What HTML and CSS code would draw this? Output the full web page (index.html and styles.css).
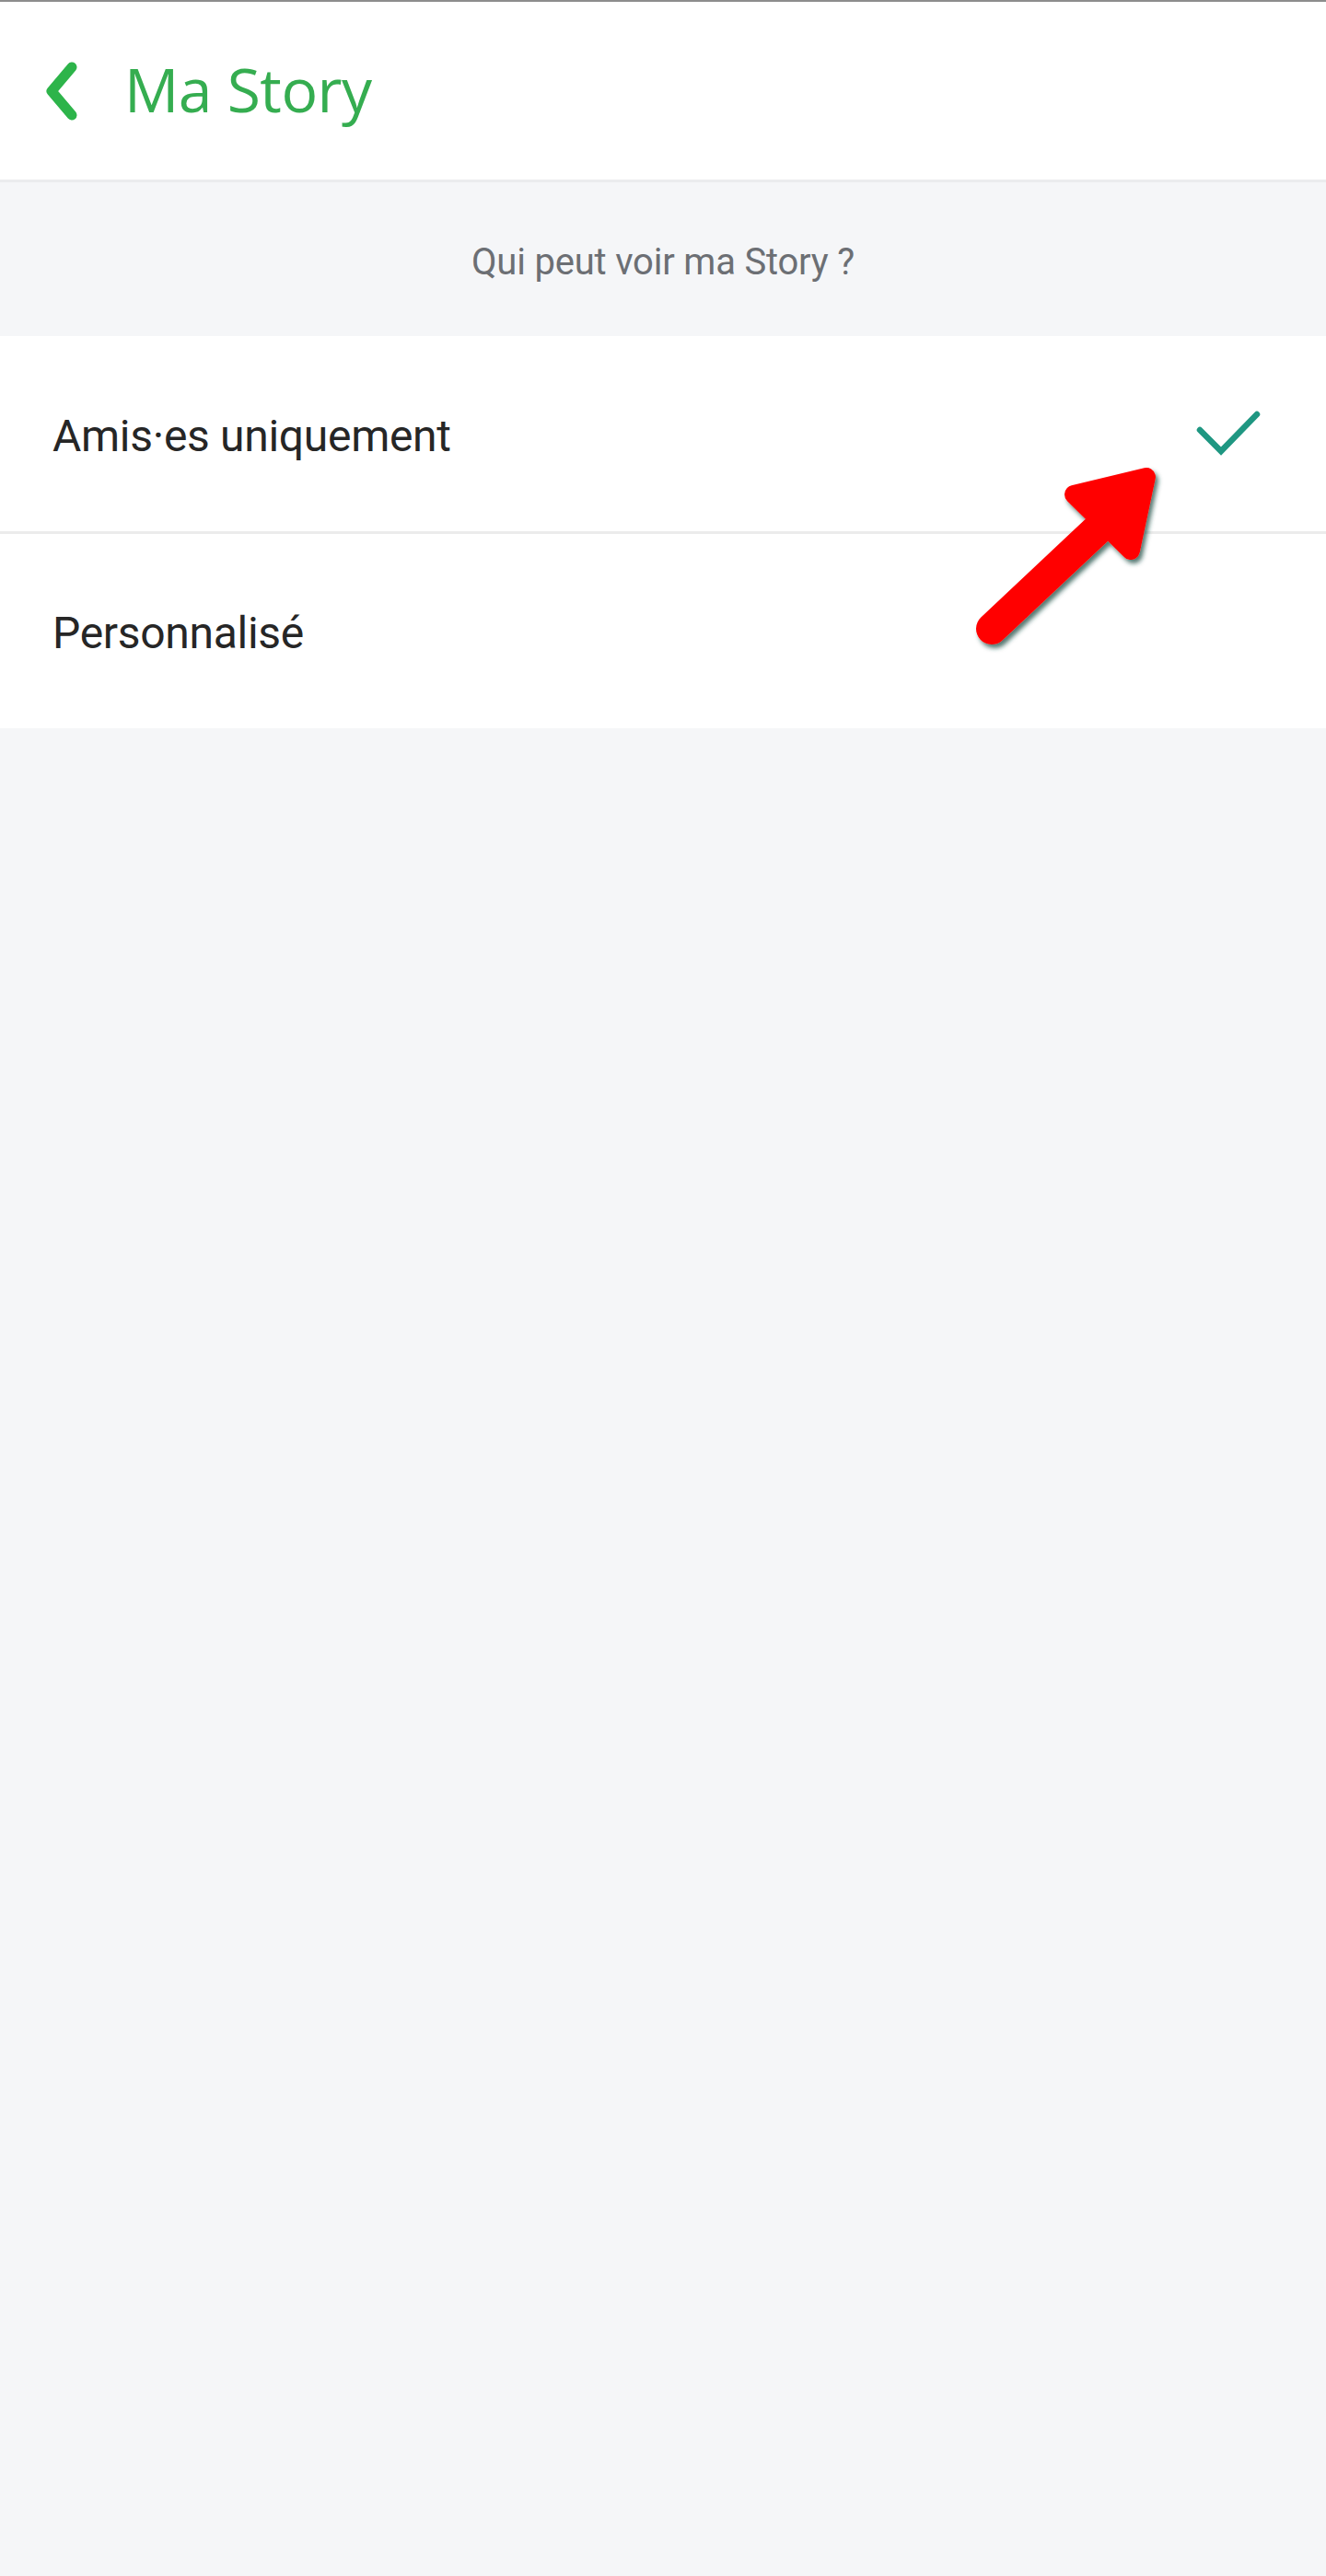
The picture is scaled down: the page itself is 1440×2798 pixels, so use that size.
FILE: index.html
```html
<!DOCTYPE html>
<html lang="fr">
<head>
<meta charset="utf-8">
<title>Ma Story</title>
<link rel="stylesheet" href="styles.css">
</head>
<body>
<div class="page">
  <header class="topbar">
    <svg class="back" width="40" height="64" viewBox="0 0 40 64" aria-hidden="true">
      <polyline points="31,6 9,32 31,58" fill="none" stroke="#2db44a" stroke-width="11" stroke-linecap="round" stroke-linejoin="round"/>
    </svg>
    <h1 class="title">Ma Story</h1>
  </header>
  <div class="section-label">Qui peut voir ma Story ?</div>
  <ul class="options">
    <li class="option">
      <span>Amis·es uniquement</span>
      <svg class="check" width="72" height="54" viewBox="0 0 72 54" aria-hidden="true">
        <polyline points="5,25 28,48 67,8" fill="none" stroke="#1f9782" stroke-width="6.5" stroke-linecap="round" stroke-linejoin="miter"/>
      </svg>
    </li>
    <li class="option">
      <span>Personnalisé</span>
    </li>
  </ul>
  <svg class="annotation" width="240" height="240" viewBox="1040 480 240 240" aria-hidden="true">
    <defs>
      <filter id="shadow" x="-20%" y="-20%" width="140%" height="140%">
        <feDropShadow dx="3" dy="4" stdDeviation="2.5" flood-color="#1f4a40" flood-opacity="0.75"/>
      </filter>
    </defs>
    <g filter="url(#shadow)" fill="#ff0000" stroke="#ff0000">
      <line x1="1077" y1="683" x2="1195" y2="572" stroke-width="34" stroke-linecap="round"/>
      <polygon points="1166,537 1245,518 1228,598" stroke-width="20" stroke-linejoin="round"/>
    </g>
  </svg>
</div>
</body>
</html>
```

FILE: styles.css
```css
* {
  box-sizing: border-box;
}

html, body {
  margin: 0;
  padding: 0;
}

body {
  background: #f5f6f8;
  font-family: Roboto, "Noto Sans", "Liberation Sans", sans-serif;
}

.page {
  position: relative;
  min-height: 2798px;
  background: #f5f6f8;
}

.topbar {
  display: flex;
  align-items: center;
  height: 198px;
  padding-left: 47px;
  background: #ffffff;
  border-top: 2px solid #8d8d8d;
  border-bottom: 3px solid #ebecee;
}

.back {
  display: block;
  flex: none;
}

.title {
  margin: 0 0 0 48px;
  font-family: "Open Sans", "Noto Sans", sans-serif;
  font-weight: 500;
  font-size: 66px;
  line-height: 1;
  color: #35ad50;
  letter-spacing: -0.5px;
  padding-bottom: 6px;
}

.section-label {
  display: flex;
  align-items: center;
  justify-content: center;
  height: 167px;
  padding-top: 6px;
  font-size: 40px;
  color: #6c6f74;
  letter-spacing: -0.2px;
}

.options {
  list-style: none;
  margin: 0;
  padding: 0;
  background: #ffffff;
}

.option {
  display: flex;
  align-items: center;
  justify-content: space-between;
  height: 212px;
  padding: 4px 70px 0 57px;
  font-size: 48px;
  color: #262626;
  letter-spacing: -0.3px;
}

.option + .option {
  border-top: 3px solid #ebebeb;
  height: 214px;
}

.check {
  display: block;
  margin-top: -8px;
}

.annotation {
  position: absolute;
  left: 1040px;
  top: 480px;
  overflow: visible;
}
```
